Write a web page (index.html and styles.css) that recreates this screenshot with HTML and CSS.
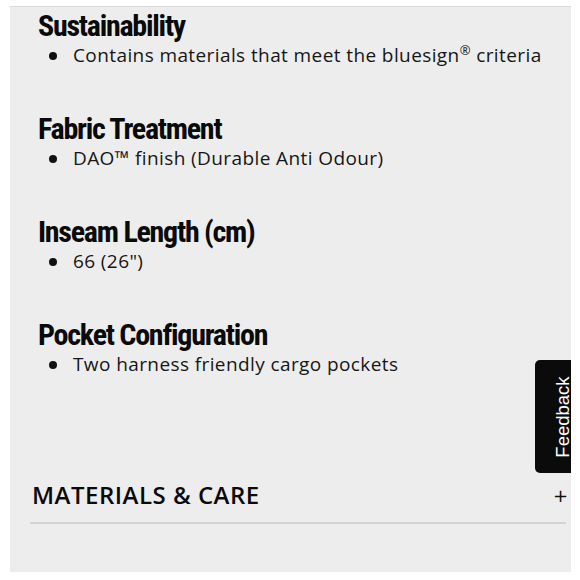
FILE: index.html
```html
<!DOCTYPE html>
<html lang="en">
<head>
<meta charset="utf-8">
<title>Product details</title>
<link rel="stylesheet" href="styles.css">
</head>
<body>
<div class="panel">
  <section class="spec">
    <h3 class="spec-title">Sustainability</h3>
    <ul class="spec-list">
      <li class="spec-item"><span class="dot"></span><span>Contains materials that meet the bluesign<sup class="reg">®</sup> criteria</span></li>
    </ul>
  </section>
  <section class="spec">
    <h3 class="spec-title">Fabric Treatment</h3>
    <ul class="spec-list">
      <li class="spec-item"><span class="dot"></span><span>DAO™ finish (Durable Anti Odour)</span></li>
    </ul>
  </section>
  <section class="spec">
    <h3 class="spec-title">Inseam Length (cm)</h3>
    <ul class="spec-list">
      <li class="spec-item"><span class="dot"></span><span>66 (26")</span></li>
    </ul>
  </section>
  <section class="spec">
    <h3 class="spec-title">Pocket Configuration</h3>
    <ul class="spec-list">
      <li class="spec-item"><span class="dot"></span><span>Two harness friendly cargo pockets</span></li>
    </ul>
  </section>
  <div class="accordion">
    <span class="accordion-title">MATERIALS &amp; CARE</span>
    <span class="accordion-icon">+</span>
  </div>
</div>
<div class="feedback"><span class="feedback-text">Feedback</span></div>
</body>
</html>
```
FILE: styles.css
```css
html, body {
  margin: 0;
  padding: 0;
  background: #ffffff;
}
body {
  width: 580px;
  height: 580px;
  overflow: hidden;
  font-family: "Open Sans", sans-serif;
  color: #111;
}
.panel {
  margin: 6px 9px 0 10px;
  height: 566px;
  background: #ededed;
  border-top: 1px solid #d9d9d9;
  box-sizing: border-box;
  padding: 2px 0 0 0;
}
.spec {
  padding-left: 28px;
  height: 103px;
}
.spec-title {
  margin: 0;
  font-family: "Roboto Condensed", "Open Sans", sans-serif;
  font-stretch: condensed;
  font-weight: 700;
  font-size: 30px;
  line-height: 33px;
  color: #0a0a0a;
  letter-spacing: -1.25px;
}
.spec-list {
  list-style: none;
  margin: 0;
  padding: 0;
}
.spec-item {
  display: flex;
  align-items: center;
  font-family: "Open Sans", sans-serif;
  font-size: 19px;
  line-height: 27px;
  letter-spacing: 0.4px;
  color: #161616;
}
.dot {
  width: 8px;
  height: 8px;
  border-radius: 50%;
  background: #111;
  margin: 0 16px 0 11px;
  flex: none;
}
.reg {
  font-size: 13px;
  line-height: 0;
}
.accordion {
  display: flex;
  justify-content: space-between;
  align-items: center;
  margin: 58px 5px 0 20px;
  padding: 0 0 11px 2px;
  border-bottom: 2px solid #d3d3d3;
}
.accordion-title {
  font-family: "Open Sans", sans-serif;
  font-weight: 600;
  font-size: 24px;
  line-height: 32px;
  letter-spacing: 0.5px;
  color: #0a0a0a;
}
.accordion-icon {
  font-family: "DejaVu Sans", sans-serif;
  font-size: 18px;
  margin-right: -2px;
  color: #111;
}
.feedback {
  position: absolute;
  left: 535px;
  top: 360px;
  width: 36px;
  height: 113px;
  box-sizing: border-box;
  padding-left: 20px;
  background: #0b0b0b;
  border-radius: 5px 0 0 5px;
  display: flex;
  align-items: center;
  justify-content: center;
}
.feedback-text {
  transform: rotate(-90deg);
  color: #ffffff;
  font-family: "Liberation Sans", Arial, sans-serif;
  font-size: 18.5px;
  white-space: nowrap;
}
```
